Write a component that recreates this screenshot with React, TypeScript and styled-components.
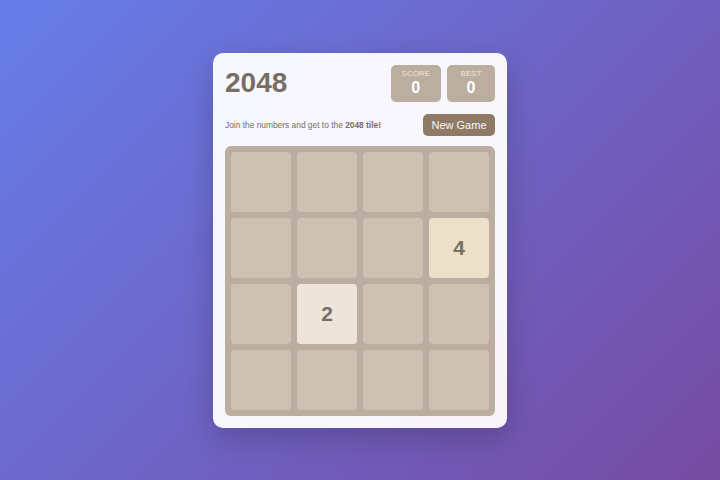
import * as React from 'react';
import styled, { createGlobalStyle } from 'styled-components';

const GlobalStyle = createGlobalStyle`
  html, body {
    margin: 0;
    padding: 0;
    height: 100%;
  }
  body {
    font-family: "Liberation Sans", Arial, sans-serif;
    background: linear-gradient(135deg, #667eea 0%, #764ba2 100%);
  }
  #root {
    height: 100%;
  }
`;

const Page = styled.div`
  width: 720px;
  height: 480px;
  display: flex;
  align-items: center;
  justify-content: center;
`;

const Card = styled.div`
  width: 270px;
  padding: 12px;
  background: rgba(255, 255, 255, 0.95);
  border-radius: 10px;
  box-shadow: 0 10px 30px rgba(0, 0, 0, 0.2);
  display: flex;
  flex-direction: column;
`;

const Header = styled.div`
  display: flex;
  justify-content: space-between;
  align-items: center;
`;

const Title = styled.h1`
  margin: 0;
  font-size: 28px;
  font-weight: bold;
  color: #776e65;
`;

const Scores = styled.div`
  display: flex;
  gap: 6px;
`;

const ScoreBox = styled.div`
  min-width: 48px;
  height: 37px;
  padding: 0 11px;
  box-sizing: border-box;
  background: #bbada0;
  border-radius: 5px;
  display: flex;
  flex-direction: column;
  align-items: center;
  justify-content: center;
  color: #fff;
`;

const ScoreLabel = styled.div`
  font-size: 8px;
  color: #eee4da;
  text-transform: uppercase;
  line-height: 1;
`;

const ScoreValue = styled.div`
  font-size: 16px;
  font-weight: bold;
  line-height: 1;
  margin-top: 2px;
`;

const Controls = styled.div`
  display: flex;
  justify-content: space-between;
  align-items: center;
  margin-top: 12px;
`;

const Intro = styled.p`
  margin: 0;
  font-size: 8.4px;
  color: #776e65;
  strong {
    font-weight: bold;
  }
`;

const NewGameButton = styled.button`
  width: 72px;
  height: 22px;
  border: none;
  border-radius: 5px;
  background: #8f7a66;
  color: #f9f6f2;
  font-family: "Liberation Sans", Arial, sans-serif;
  font-size: 11px;
  padding: 0;
  cursor: pointer;
`;

const Board = styled.div`
  margin-top: 10px;
  background: #bbada0;
  border-radius: 6px;
  padding: 6px;
  display: grid;
  grid-template-columns: repeat(4, 60px);
  grid-auto-rows: 60px;
  gap: 6px;
`;

const tileColors: Record<number, string> = {
  0: '#cdc1b4',
  2: '#eee4da',
  4: '#ede0c8',
};

const Cell = styled.div<{ $value: number }>`
  border-radius: 4px;
  background: ${(p) => tileColors[p.$value] || '#cdc1b4'};
  display: flex;
  align-items: center;
  justify-content: center;
  font-size: 21px;
  font-weight: bold;
  color: #776e65;
`;

const grid = [
  [0, 0, 0, 0],
  [0, 0, 0, 4],
  [0, 2, 0, 0],
  [0, 0, 0, 0],
];

export default function App() {
  return (
    <>
      <GlobalStyle />
      <Page>
        <Card>
          <Header>
            <Title>2048</Title>
            <Scores>
              <ScoreBox>
                <ScoreLabel>Score</ScoreLabel>
                <ScoreValue>0</ScoreValue>
              </ScoreBox>
              <ScoreBox>
                <ScoreLabel>Best</ScoreLabel>
                <ScoreValue>0</ScoreValue>
              </ScoreBox>
            </Scores>
          </Header>
          <Controls>
            <Intro>
              Join the numbers and get to the <strong>2048 tile!</strong>
            </Intro>
            <NewGameButton>New Game</NewGameButton>
          </Controls>
          <Board>
            {grid.flat().map((v, i) => (
              <Cell key={i} $value={v}>
                {v > 0 ? v : ''}
              </Cell>
            ))}
          </Board>
        </Card>
      </Page>
    </>
  );
}
